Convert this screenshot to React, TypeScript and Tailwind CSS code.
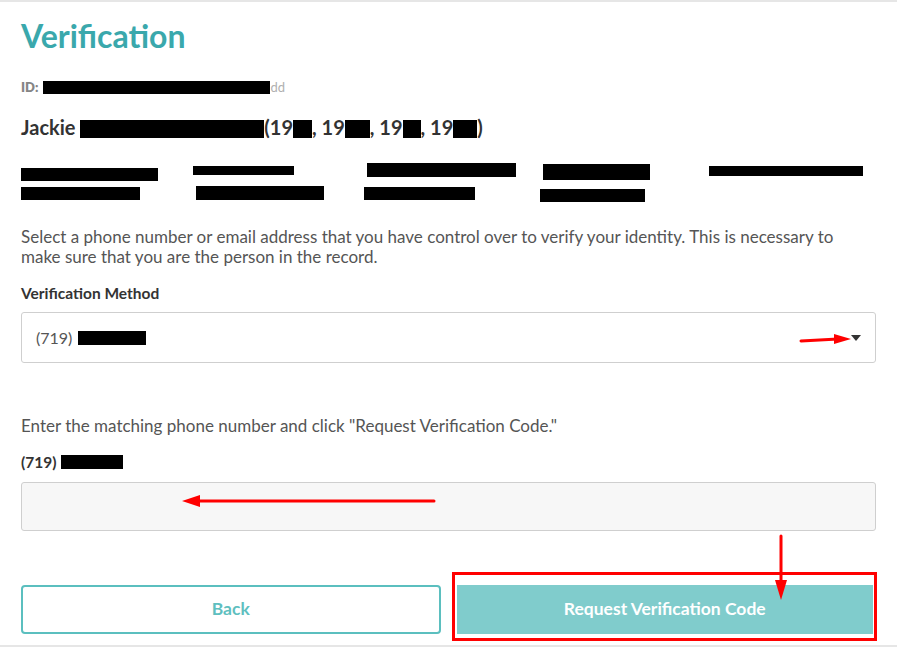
import React from 'react';

type Bar = { ml: number; w: number; mt: number; h: number };

// redacted record details, one column per entry
const columns: Bar[][] = [
  [{ ml: 0, w: 137, mt: 6, h: 13 }, { ml: 0, w: 119, mt: 6, h: 13 }],
  [{ ml: 1, w: 101, mt: 4, h: 9 }, { ml: 4, w: 128, mt: 11, h: 14 }],
  [{ ml: 4, w: 149, mt: 1, h: 14 }, { ml: 1, w: 111, mt: 10, h: 13 }],
  [{ ml: 9, w: 107, mt: 2, h: 16 }, { ml: 6, w: 105, mt: 9, h: 13 }],
  [{ ml: 4, w: 154, mt: 4, h: 10 }],
];

function Redact({ w, h = 18, className = '' }: { w: number; h?: number; className?: string }) {
  return <span className={`inline-block bg-black ${className}`} style={{ width: w, height: h }} />;
}

export default function App() {
  return (
    <div className="relative w-[897px] h-[647px] bg-white border-t-2 border-b-2 border-[#e6e6e6] px-[21px] font-['Lato','Noto_Sans',sans-serif] overflow-hidden">
      <h1 className="mt-[14px] text-[32px] leading-[40px] font-bold text-[#3aa8ac]">Verification</h1>

      <div className="mt-[23px] flex items-center text-[13px] leading-[16px] font-extrabold text-[#858585]">
        <span>ID:</span>
        <Redact w={227} h={13} className="ml-[5px]" />
        <span className="font-normal text-[#b0b0b0]">dd</span>
      </div>

      <div className="mt-[19px] text-[20px] leading-[26px] font-bold text-[#333]">
        Jackie <Redact w={184} className="align-[-3px]" />(19<Redact w={19} className="align-[-3px]" />, 19
        <Redact w={25} className="align-[-3px]" />, 19<Redact w={18} className="align-[-3px]" />, 19
        <Redact w={24} className="align-[-3px]" />)
      </div>

      <div className="mt-[22px] grid grid-cols-5 h-[42px]">
        {columns.map((col, i) => (
          <div key={i} className="flex flex-col items-start">
            {col.map((b, j) => (
              <span key={j} className="block bg-black" style={{ marginLeft: b.ml, marginTop: b.mt, width: b.w, height: b.h }} />
            ))}
          </div>
        ))}
      </div>

      <p className="mt-[23px] text-[17px] leading-[20px] text-[#555]">
        Select a phone number or email address that you have control over to verify your identity. This is necessary to
        make sure that you are the person in the record.
      </p>

      <label className="block mt-[16px] text-[15.5px] leading-[20px] font-bold text-[#333]">Verification Method</label>
      <div className="mt-[9px] h-[51px] flex items-center justify-between border border-[#cfcfcf] rounded-[3px] pl-[14px] pr-[14px] text-[16px] text-[#555]">
        <span className="flex items-center gap-[6px]">
          (719) <Redact w={68} h={14} />
        </span>
        <span className="w-0 h-0 border-l-[5px] border-r-[5px] border-t-[6px] border-l-transparent border-r-transparent border-t-[#333]" />
      </div>

      <p className="mt-[53px] text-[17px] leading-[20px] text-[#555]">
        Enter the matching phone number and click "Request Verification Code."
      </p>
      <div className="mt-[16px] flex items-center gap-[5px] text-[15.5px] leading-[20px] font-bold text-[#333]">
        (719) <Redact w={62} h={14} />
      </div>
      <div className="mt-[10px] h-[49px] bg-[#f7f7f7] border border-[#cfcfcf] rounded-[3px]" />

      <div className="mt-[54px] grid grid-cols-2 gap-4">
        <button className="h-[49px] border-2 border-[#5bbfbf] rounded-[4px] text-[17.5px] font-bold text-[#5fbfbf] bg-white">
          Back
        </button>
        <button className="h-[49px] mr-[3px] bg-[#80cccc] text-[17.5px] font-bold text-white">Request Verification Code</button>
      </div>

      {/* red annotation overlay */}
      <svg className="absolute left-0 top-[-2px] pointer-events-none" width="897" height="647">
        <line x1="801" y1="341" x2="838" y2="339" stroke="#ff0000" strokeWidth="3" strokeLinecap="round" />
        <polygon points="834,334 851,339 834,344" fill="#ff0000" />
        <line x1="434" y1="501" x2="196" y2="501" stroke="#ff0000" strokeWidth="3" strokeLinecap="round" />
        <polygon points="200,495 182,501 200,507" fill="#ff0000" />
        <line x1="781" y1="536" x2="781" y2="584" stroke="#ff0000" strokeWidth="3" strokeLinecap="round" />
        <polygon points="775,580 781,600 787,580" fill="#ff0000" />
        <rect x="453.5" y="573.5" width="422" height="66" fill="none" stroke="#ff0000" strokeWidth="3" />
      </svg>
    </div>
  );
}
